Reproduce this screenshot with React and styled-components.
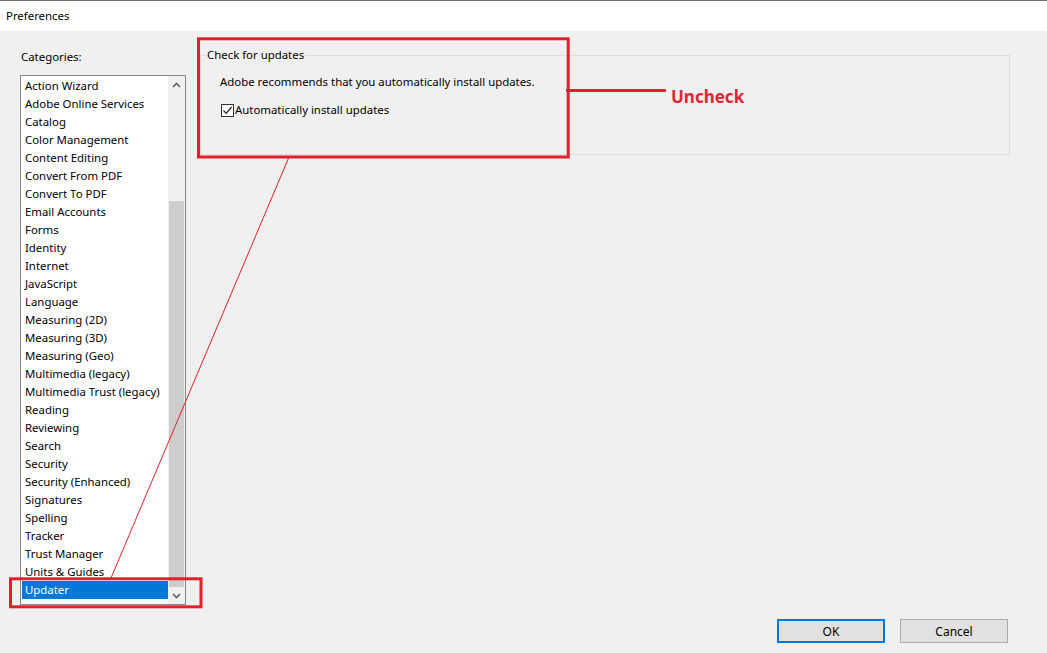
import styled, { createGlobalStyle } from 'styled-components'

const GlobalStyle = createGlobalStyle`
    html, body {
        margin: 0;
        padding: 0;
        background: #f0f0f0;
    }
    body {
        font-family: "Segoe UI", "Noto Sans", "Open Sans", sans-serif;
        font-size: 11.4px;
        color: #000;
    }
`

const Janela = styled.div`
    position: relative;
    width: 1047px;
    height: 653px;
    display: flex;
    flex-direction: column;
    background: #f0f0f0;
    overflow: hidden;
`
const BarraTitulo = styled.div`
    height: 31px;
    box-sizing: border-box;
    border-top: 1px solid #6e6e6e;
    background: #fff;
    display: flex;
    align-items: center;
    padding-left: 6px;
    padding-bottom: 1px;
`
const Corpo = styled.div`
    flex: 1;
    display: grid;
    grid-template-columns: 166px 1fr;
    column-gap: 14px;
    padding: 17px 37px 0 20px;
`
const ColunaEsq = styled.div`
    display: flex;
    flex-direction: column;
`
const Rotulo = styled.div`
    height: 16px;
    line-height: 18px;
    margin-left: 1px;
    margin-bottom: 11px;
`
const ListBox = styled.div`
    height: 530px;
    box-sizing: border-box;
    border: 1px solid #828790;
    background: #fff;
    display: flex;
`
const Itens = styled.div`
    flex: 1;
    padding: 1px 0 0 1px;
`
const Item = styled.div`
    height: 18px;
    line-height: 18px;
    padding-left: 3px;
    white-space: nowrap;
    background: ${p => (p.$ativo ? '#0078d7' : 'transparent')};
    color: ${p => (p.$ativo ? '#fff' : '#000')};
`
const Scroll = styled.div`
    width: 17px;
    background: #f0f0f0;
    display: flex;
    flex-direction: column;
`
const Seta = styled.div`
    height: 17px;
    display: flex;
    align-items: center;
    justify-content: center;
`
const Trilho = styled.div`
    flex: 1;
    display: flex;
    flex-direction: column;
    padding: 0 1px;
`
const Polegar = styled.div`
    margin-top: 108px;
    flex: 1;
    background: #cdcdcd;
`
const ColunaDir = styled.div`
    display: flex;
    flex-direction: column;
`
const Grupo = styled.fieldset`
    margin: -1px 0 0 0;
    height: 108px;
    box-sizing: border-box;
    border: 1px solid #dcdcdc;
    padding: 11px 0 0 0;
`
const Legenda = styled.legend`
    padding: 0 1px;
    margin-left: 5px;
    line-height: 16px;
`
const Conteudo = styled.div`
    padding-left: 19px;
`
const Texto = styled.div`
    line-height: 16px;
`
const LinhaCheck = styled.label`
    display: flex;
    align-items: center;
    gap: 1px;
    margin-top: 12px;
    line-height: 16px;
`
const Caixa = styled.span`
    width: 13px;
    height: 13px;
    margin-left: 1px;
    box-sizing: border-box;
    border: 1px solid #333;
    background: #fff;
    display: flex;
    align-items: center;
    justify-content: center;
`
const Rodape = styled.div`
    display: flex;
    justify-content: flex-end;
    gap: 15px;
    padding: 0 39px 10px 0;
`
const Botao = styled.button`
    width: 108px;
    height: 24px;
    box-sizing: border-box;
    font: inherit;
    font-size: 12px;
    background: #e1e1e1;
    border: ${p => (p.$padrao ? '2px solid #0078d7' : '1px solid #adadad')};
    color: #000;
    padding: 0;
`
const Overlay = styled.svg`
    position: absolute;
    left: 0;
    top: 0;
    pointer-events: none;
`
const Nota = styled.span`
    position: absolute;
    left: 671px;
    top: 85px;
    font-family: "Segoe UI", "Noto Sans", sans-serif;
    font-weight: 700;
    font-size: 17px;
    color: #e02633;
`

const categorias = [
    'Action Wizard', 'Adobe Online Services', 'Catalog', 'Color Management',
    'Content Editing', 'Convert From PDF', 'Convert To PDF', 'Email Accounts',
    'Forms', 'Identity', 'Internet', 'JavaScript', 'Language', 'Measuring (2D)',
    'Measuring (3D)', 'Measuring (Geo)', 'Multimedia (legacy)',
    'Multimedia Trust (legacy)', 'Reading', 'Reviewing', 'Search', 'Security',
    'Security (Enhanced)', 'Signatures', 'Spelling', 'Tracker', 'Trust Manager',
    'Units & Guides', 'Updater'
]

function Chevron({ baixo }) {
    return (
        <svg width="9" height="6" viewBox="0 0 9 6">
            <path
                d={baixo ? 'M1 1 L4.5 4.5 L8 1' : 'M1 5 L4.5 1.5 L8 5'}
                fill="none"
                stroke="#606060"
                strokeWidth="1.6"
            />
        </svg>
    )
}

export default function App() {
    return (
        <>
            <GlobalStyle />
            <Janela>
                <BarraTitulo>Preferences</BarraTitulo>
                <Corpo>
                    <ColunaEsq>
                        <Rotulo>Categories:</Rotulo>
                        <ListBox>
                            <Itens>
                                {categorias.map(c => (
                                    <Item key={c} $ativo={c === 'Updater'}>{c}</Item>
                                ))}
                            </Itens>
                            <Scroll>
                                <Seta><Chevron /></Seta>
                                <Trilho><Polegar /></Trilho>
                                <Seta><Chevron baixo /></Seta>
                            </Scroll>
                        </ListBox>
                    </ColunaEsq>
                    <ColunaDir>
                        <Grupo>
                            <Legenda>Check for updates</Legenda>
                            <Conteudo>
                                <Texto>Adobe recommends that you automatically install updates.</Texto>
                                <LinhaCheck>
                                    <Caixa>
                                        <svg width="11" height="11" viewBox="0 0 11 11">
                                            <path d="M1.5 5.5 L4.2 8.3 L9.6 2" fill="none" stroke="#222" strokeWidth="1.2" />
                                        </svg>
                                    </Caixa>
                                    Automatically install updates
                                </LinhaCheck>
                            </Conteudo>
                        </Grupo>
                    </ColunaDir>
                </Corpo>
                <Rodape>
                    <Botao $padrao>OK</Botao>
                    <Botao>Cancel</Botao>
                </Rodape>
                <Overlay width="1047" height="653">
                    <rect x="198.5" y="38.8" width="369.7" height="118.2" fill="none" stroke="#e0202a" strokeWidth="3" />
                    <line x1="566" y1="90.5" x2="666" y2="90.5" stroke="#e0202a" strokeWidth="3" />
                    <rect x="10.5" y="578.8" width="190.5" height="28" fill="none" stroke="#e0202a" strokeWidth="3" />
                    <line x1="289" y1="157" x2="111" y2="578" stroke="#e0202a" strokeWidth="1" />
                </Overlay>
                <Nota>Uncheck</Nota>
            </Janela>
        </>
    )
}
